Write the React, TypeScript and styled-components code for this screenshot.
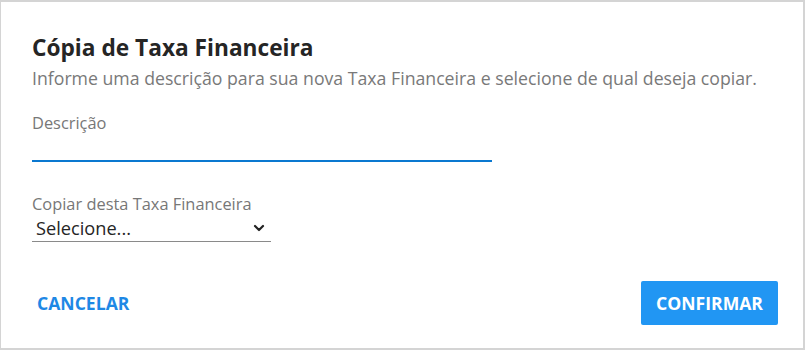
import styled, { createGlobalStyle } from "styled-components";

const GlobalStyle = createGlobalStyle`
  html, body {
    margin: 0;
    padding: 0;
    background: #ffffff;
  }
  * {
    box-sizing: border-box;
  }
`;

const Dialog = styled.div`
  width: 805px;
  height: 350px;
  display: flex;
  flex-direction: column;
  padding: 32px 25px 23px 31px;
  border: 1px solid #d4d4d4;
  border-top: 2px solid #d4d4d4;
  border-right: 2px solid #d4d4d4;
  border-bottom: 2px solid #d4d4d4;
  background: #fff;
  font-family: "Open Sans", "Noto Sans", sans-serif;
`;

const Title = styled.h2`
  margin: 0;
  font-size: 22.7px;
  line-height: 28px;
  font-weight: 700;
  color: #252525;
`;

const Subtitle = styled.p`
  margin: 4px 0 0;
  font-size: 17.7px;
  line-height: 24px;
  color: #797979;
`;

const Field = styled.div<{ $width: number; $top: number }>`
  display: flex;
  flex-direction: column;
  width: ${(p) => p.$width}px;
  margin-top: ${(p) => p.$top}px;
`;

const Label = styled.label`
  font-size: 16.4px;
  line-height: 20px;
  color: #777777;
`;

const TextInput = styled.input`
  height: 29px;
  border: none;
  border-bottom: 2px solid #0a78d0;
  outline: none;
  padding: 0;
  font-family: inherit;
  font-size: 16px;
  color: #252525;
  background: transparent;
`;

const SelectBox = styled.div`
  position: relative;
  height: 28px;
  border-bottom: 1px solid #8a8a8a;
  display: flex;
  align-items: center;
  padding: 0 4px;
`;

const SelectText = styled.span`
  flex: 1;
  font-size: 18.2px;
  line-height: 24px;
  color: #252525;
`;

const Chevron = styled.svg`
  width: 12px;
  height: 12px;
  margin-right: 2px;
`;

const Actions = styled.div`
  margin-top: auto;
  display: flex;
  justify-content: space-between;
  align-items: center;
`;

const Button = styled.button<{ $primary?: boolean }>`
  height: 44px;
  padding: 0 ${(p) => (p.$primary ? 15 : 5)}px;
  border: none;
  border-radius: 2px;
  font-family: inherit;
  font-size: 17.6px;
  font-weight: 700;
  cursor: pointer;
  background: ${(p) => (p.$primary ? "#2196f3" : "transparent")};
  color: ${(p) => (p.$primary ? "#ffffff" : "#1e88e5")};
`;

export default function App() {
  return (
    <>
      <GlobalStyle />
      <Dialog>
        <Title>Cópia de Taxa Financeira</Title>
        <Subtitle>
          Informe uma descrição para sua nova Taxa Financeira e selecione de qual deseja copiar.
        </Subtitle>
        <Field $width={460} $top={23}>
          <Label>Descrição</Label>
          <TextInput type="text" />
        </Field>
        <Field $width={239} $top={32}>
          <Label>Copiar desta Taxa Financeira</Label>
          <SelectBox>
            <SelectText>Selecione...</SelectText>
            <Chevron viewBox="0 0 12 12">
              <path d="M2 4 L6 8 L10 4" fill="none" stroke="#222" strokeWidth="2.2" strokeLinecap="round" strokeLinejoin="round" />
            </Chevron>
          </SelectBox>
        </Field>
        <Actions>
          <Button>CANCELAR</Button>
          <Button $primary>CONFIRMAR</Button>
        </Actions>
      </Dialog>
    </>
  );
}
